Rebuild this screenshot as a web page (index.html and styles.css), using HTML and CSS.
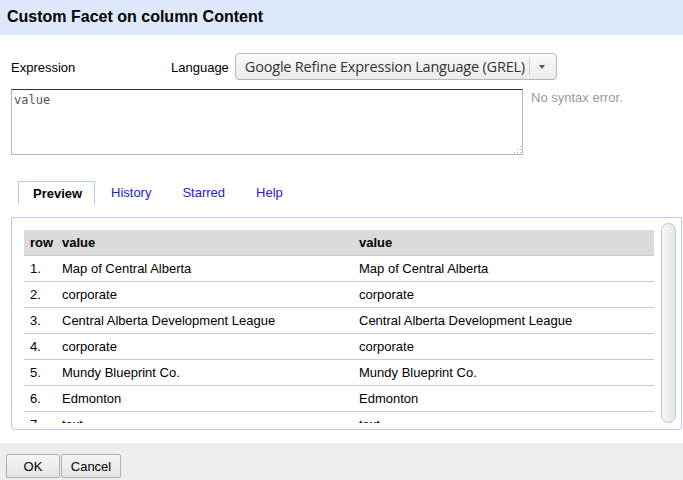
FILE: index.html
```html
<!DOCTYPE html>
<html>
<head>
<meta charset="utf-8">
<link rel="stylesheet" href="styles.css">
</head>
<body>
<div class="dialog">
  <div class="header">Custom Facet on column Content</div>
  <div class="body">
    <div class="controls">
      <div class="lbl-expr">Expression</div>
      <div class="lbl-lang">Language</div>
      <div class="select">
        <span class="select-text">Google Refine Expression Language (GREL)</span>
        <span class="select-sep"></span>
        <span class="select-arrow"></span>
      </div>
    </div>
    <div class="editor-row">
      <div class="textarea">value<span class="grip"></span></div>
      <div class="status">No syntax error.</div>
    </div>
    <div class="tabs">
      <div class="tab active">Preview</div>
      <div class="tab">History</div>
      <div class="tab">Starred</div>
      <div class="tab">Help</div>
    </div>
    <div class="panel">
      <div class="table-wrap">
        <table class="preview">
          <colgroup>
            <col class="col-row">
            <col class="col-val">
            <col class="col-res">
          </colgroup>
          <thead>
            <tr><th>row</th><th>value</th><th>value</th></tr>
          </thead>
          <tbody>
            <tr><td>1.</td><td>Map of Central Alberta</td><td>Map of Central Alberta</td></tr>
            <tr><td>2.</td><td>corporate</td><td>corporate</td></tr>
            <tr><td>3.</td><td>Central Alberta Development League</td><td>Central Alberta Development League</td></tr>
            <tr><td>4.</td><td>corporate</td><td>corporate</td></tr>
            <tr><td>5.</td><td>Mundy Blueprint Co.</td><td>Mundy Blueprint Co.</td></tr>
            <tr><td>6.</td><td>Edmonton</td><td>Edmonton</td></tr>
            <tr><td>7.</td><td>text</td><td>text</td></tr>
          </tbody>
        </table>
      </div>
      <div class="scrollbar"><div class="thumb"></div></div>
    </div>
  </div>
  <div class="footer">
    <button class="btn btn-ok">OK</button>
    <button class="btn btn-cancel">Cancel</button>
  </div>
</div>
</body>
</html>
```
FILE: styles.css
```css
html, body {
  margin: 0;
  padding: 0;
  background: #ffffff;
}
body {
  font-family: "Liberation Sans", Arial, sans-serif;
  font-size: 13px;
  color: #000;
  width: 683px;
  height: 480px;
  overflow: hidden;
}
.dialog {
  display: flex;
  flex-direction: column;
  height: 480px;
}
.header {
  height: 35px;
  line-height: 34px;
  background: #dde9fa;
  padding-left: 7px;
  font-size: 16px;
  font-weight: bold;
}
.body {
  flex: 1;
  padding: 18px 0 0 11px;
}
.controls {
  display: flex;
  align-items: center;
  height: 27px;
}
.lbl-expr {
  width: 160px;
  margin-top: 2px;
}
.lbl-lang {
  margin-right: 6px;
  margin-top: 2px;
}
.select {
  display: flex;
  align-items: center;
  box-sizing: border-box;
  width: 322px;
  height: 27px;
  border: 1px solid #b8b8b8;
  border-radius: 4px;
  background: linear-gradient(#fbfbfb, #ebebeb);
  padding-left: 9px;
  font-family: "Open Sans", "DejaVu Sans", sans-serif;
  font-size: 14.5px;
  color: #333;
}
.select-text {
  white-space: nowrap;
  letter-spacing: -0.2px;
}
.select-sep {
  width: 1px;
  height: 17px;
  background: #cfcfcf;
  margin-left: auto;
}
.select-arrow {
  width: 0;
  height: 0;
  border-left: 3px solid transparent;
  border-right: 3px solid transparent;
  border-top: 4px solid #555;
  margin: 0 11px 0 9px;
}
.editor-row {
  display: flex;
  margin-top: 9px;
}
.textarea {
  position: relative;
  box-sizing: border-box;
  width: 512px;
  height: 66px;
  border: 1px solid #b5b5b5;
  border-top-color: #333;
  padding: 3px 2px;
  font-family: "DejaVu Sans Mono", monospace;
  font-size: 12px;
  color: #555;
  line-height: 14px;
}
.grip {
  position: absolute;
  right: 1px;
  bottom: 1px;
  width: 8px;
  height: 8px;
  background:
    radial-gradient(circle, #aaa 0.8px, transparent 1px) 0 0 / 3px 3px;
  clip-path: polygon(100% 0, 100% 100%, 0 100%);
}
.status {
  margin-left: 8px;
  margin-top: 1px;
  font-size: 13px;
  color: #999;
}
.tabs {
  display: flex;
  margin-top: 26px;
  margin-left: 7px;
  height: 23px;
}
.tab {
  box-sizing: border-box;
  height: 23px;
  line-height: 23px;
  padding: 0 15px 0 16px;
  color: #2222dd;
}
.tab.active {
  width: 77px;
  padding: 0 0 0 14px;
  border: 1px solid #b8c9f6;
  border-bottom: none;
  color: #000;
  font-weight: bold;
}
.panel {
  position: relative;
  box-sizing: border-box;
  width: 671px;
  height: 213px;
  margin-top: 13px;
  border: 1px solid #b8c9f6;
  border-radius: 0 0 4px 4px;
  display: flex;
  align-items: flex-start;
}
.table-wrap {
  width: 630px;
  height: 193px;
  padding: 12px 0 0 12px;
  overflow: hidden;
}
.preview {
  border-collapse: collapse;
  table-layout: fixed;
  width: 630px;
}
.col-row {
  width: 32px;
}
.col-val {
  width: 297px;
}
.preview th {
  background: #dbdbdb;
  text-align: left;
  height: 25px;
  padding: 0 6px;
  border-bottom: 1px solid #c8c8c8;
  font-weight: bold;
  white-space: nowrap;
}
.preview td {
  height: 25px;
  padding: 0 6px;
  border-bottom: 1px solid #c8c8c8;
  white-space: nowrap;
}
.scrollbar {
  position: absolute;
  left: 649px;
  top: 5px;
  width: 15px;
  height: 200px;
}
.thumb {
  box-sizing: border-box;
  width: 15px;
  height: 200px;
  border: 1px solid #c4c4c4;
  border-radius: 8px;
  background: linear-gradient(90deg, #f8f8f8, #e6e6e6);
}
.footer {
  height: 37px;
  background: #ededed;
  display: flex;
  align-items: flex-start;
  padding: 11px 0 0 6px;
  box-sizing: border-box;
  gap: 1px;
}
.btn {
  box-sizing: border-box;
  height: 24px;
  border: 1px solid #b0b0b0;
  border-radius: 2px;
  background: linear-gradient(#f6f6f6, #e4e4e4);
  font-family: "Liberation Sans", Arial, sans-serif;
  font-size: 13px;
  color: #000;
  padding: 0;
}
.btn-ok {
  width: 54px;
}
.btn-cancel {
  width: 60px;
}
```
